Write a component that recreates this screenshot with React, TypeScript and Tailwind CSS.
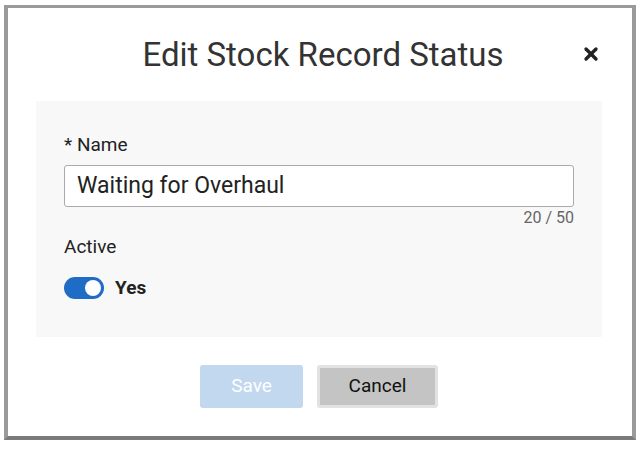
import { X } from 'lucide-react';

const App = () => {
  return (
    <div className="w-[640px] h-[449px] bg-white pl-[4px] pt-[5px]" style={{ fontFamily: 'Roboto, "Liberation Sans", sans-serif' }}>
      <div className="w-[632px] h-[435px] border-[4px] border-[#9a9a9a] border-b-[#7b7b7b] border-t-[3px] bg-white flex flex-col">
        <div className="relative h-[93px] flex items-center justify-center">
          <h2 className="text-[33px] text-[#333] pl-[6px]">Edit Stock Record Status</h2>
          <button className="absolute right-[31px] top-[36px] text-[#222]">
            <X size={20} strokeWidth={4} />
          </button>
        </div>

        <div className="ml-[28px] w-[566px] h-[236px] bg-[#f8f8f8] px-[28px] pt-[32px]">
          <label className="block text-[19px] text-[#222] leading-6">* Name</label>
          <div className="mt-[8px] h-[42px] bg-white border border-[#aaa] rounded-[3px] flex items-center px-[12px] text-[23px] text-[#222]">
            Waiting for Overhaul
          </div>
          <p className="text-right text-[16px] text-[#666] leading-5 mt-[1px]">20 / 50</p>

          <p className="mt-[7px] text-[19px] text-[#222] leading-6">Active</p>
          <div className="mt-[15px] flex items-center gap-[11px]">
            <div className="w-[40px] h-[22px] rounded-full bg-[#1f6cc6] flex items-center justify-end pr-[3px]">
              <div className="w-[16px] h-[16px] rounded-full bg-white" />
            </div>
            <span className="text-[19px] font-bold text-[#222]">Yes</span>
          </div>
        </div>

        <div className="mt-[28px] flex justify-center gap-[14px] pr-[2px]">
          <button className="w-[103px] h-[43px] rounded-[3px] bg-[#c1d8ef] text-white text-[19px]">Save</button>
          <button className="w-[121px] h-[43px] rounded-[3px] bg-[#c4c4c4] border-[3px] border-[#e2e2e2] text-[#111] text-[19px]">
            Cancel
          </button>
        </div>
      </div>
    </div>
  );
};

export default App;
